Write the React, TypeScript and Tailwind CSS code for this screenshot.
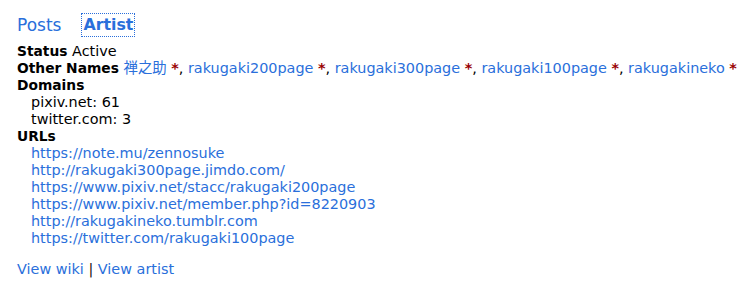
const names = ["rakugaki200page", "rakugaki300page", "rakugaki100page", "rakugakineko"]

const urls = [
  "https://note.mu/zennosuke",
  "http://rakugaki300page.jimdo.com/",
  "https://www.pixiv.net/stacc/rakugaki200page",
  "https://www.pixiv.net/member.php?id=8220903",
  "http://rakugakineko.tumblr.com",
  "https://twitter.com/rakugaki100page",
]

const App = () => {
  return (
    <div className="w-[750px] h-[298px] bg-white text-black font-['DejaVu_Sans','Noto_Sans_CJK_JP',sans-serif] text-[14.4px] leading-[17px] px-[17px] pt-[14px]">
      {/* Tabs */}
      <div className="flex items-center gap-[21px] text-[17px] leading-[22px] text-[#2a6fdb] mb-[7px]">
        <span>Posts</span>
        <span className="font-bold text-[15.8px] outline-1 outline-dotted outline-[#2a6fdb] px-[1px]">Artist</span>
      </div>

      <div>
        <b className="text-[13.8px]">Status</b> Active
      </div>
      <div className="whitespace-nowrap">
        <b className="text-[13.8px]">Other Names</b>{" "}
        <a className="text-[#2a6fdb]">禅之助</a> <span className="text-[#990000] font-bold">*</span>
        {names.map((n) => (
          <span key={n}>
            , <a className="text-[#2a6fdb]">{n}</a> <span className="text-[#990000] font-bold">*</span>
          </span>
        ))}
      </div>
      <div className="font-bold text-[13.8px]">Domains</div>
      <div className="pl-[14px]">
        <div>pixiv.net: 61</div>
        <div>twitter.com: 3</div>
      </div>
      <div className="font-bold text-[13.8px]">URLs</div>
      <div className="pl-[14px]">
        {urls.map((u) => (
          <div key={u}>
            <a className="text-[#2a6fdb]">{u}</a>
          </div>
        ))}
      </div>

      <div className="mt-[14px]">
        <a className="text-[#2a6fdb]">View wiki</a> <span className="text-[#1a1010]">|</span>{" "}
        <a className="text-[#2a6fdb]">View artist</a>
      </div>
    </div>
  )
}

export default App
